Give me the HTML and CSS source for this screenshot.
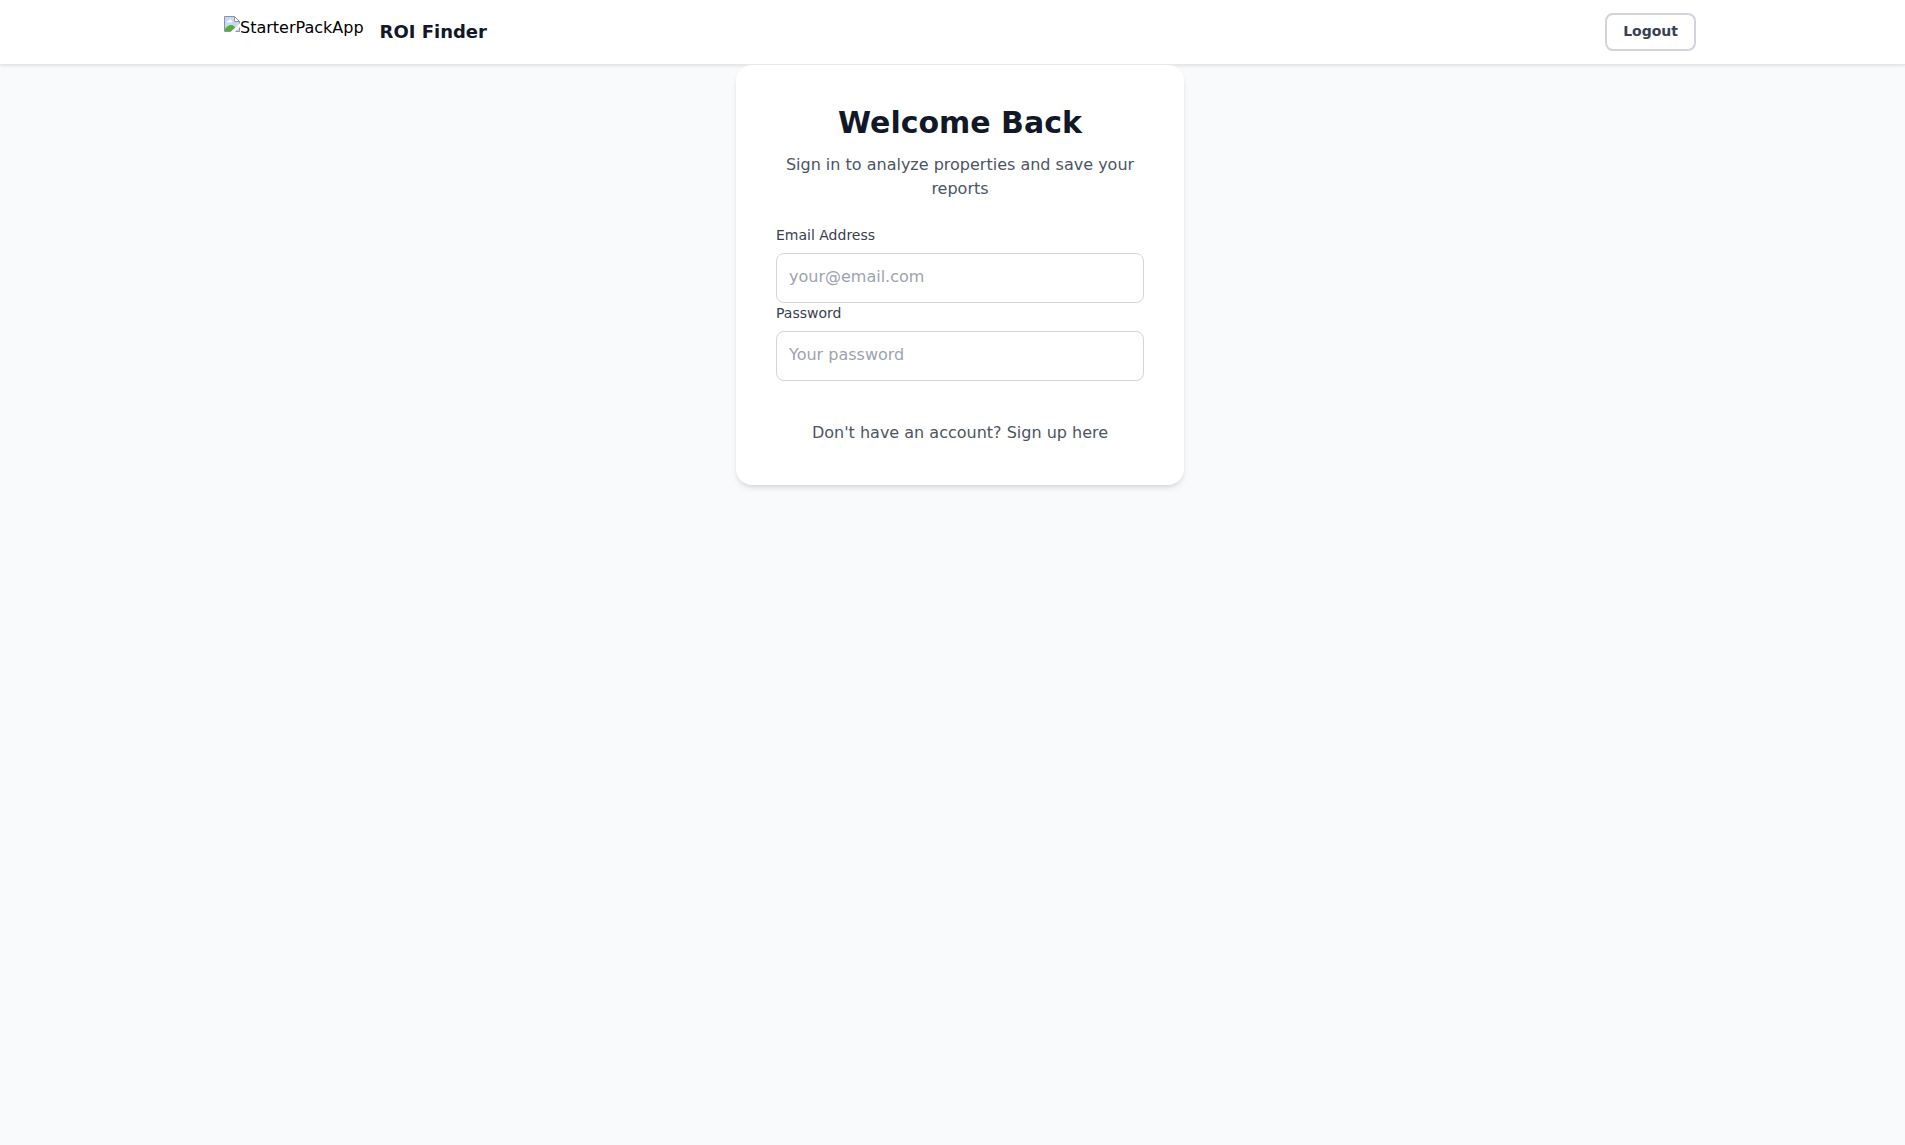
FILE: index.html
```html
<!DOCTYPE html>
<html lang="en">
<head>
<meta charset="utf-8">
<meta name="viewport" content="width=device-width, initial-scale=1">
<title>ROI Finder</title>
<link rel="stylesheet" href="styles.css">
</head>
<body>
<header class="site-header">
  <div class="header-inner">
    <div class="brand">
      <div class="brand-logo">
        <svg class="brand-icon" width="16" height="16" viewBox="0 0 16 16" aria-hidden="true">
          <path d="M0 0H11L16 5V16H0Z" fill="#fff"/>
          <path d="M1 1H10V6H15V15H1Z" fill="#c3d6fb"/>
          <path d="M3 6.500C3 5 4 4.800 4.500 4.500C5 3 7 3 7.500 4.500C8.500 4.800 8.500 6 8 6.500Z" fill="#fff"/>
          <path d="M1 15V13C3 10 6 8.500 8 9C10 9.500 12 11.500 13 15Z" fill="#56ad38"/>
          <path d="M.5 15.500V.5H10.500L15.500 5.500V15.500ZM10.500 .5V5.500H15.500" fill="none" stroke="#929292"/>
          <path d="M16 7L6.500 16H11L16 11Z" fill="#fff"/>
        </svg>
        <span>StarterPackApp</span>
      </div>
      <span class="brand-name">ROI Finder</span>
    </div>
    <button class="logout" type="button">Logout</button>
  </div>
</header>
<main class="page">
  <section class="card">
    <h1 class="card-title">Welcome Back</h1>
    <p class="card-lead">Sign in to analyze properties and save your reports</p>
    <form class="form">
      <label class="label" for="email">Email Address</label>
      <input class="input" id="email" type="email" placeholder="your@email.com">
      <label class="label" for="password">Password</label>
      <input class="input" id="password" type="password" placeholder="Your password">
    </form>
    <p class="card-footer">Don't have an account? <a class="link" href="#signup">Sign up here</a></p>
  </section>
</main>
</body>
</html>
```
FILE: styles.css
```css
:root {
  --scrollbar: 15px;
}

*, *::before, *::after {
  box-sizing: border-box;
}

body {
  margin: 0;
  min-height: 100vh;
  background: #f9fafb;
  color: #000;
  font: 16px/24px "DejaVu Sans", sans-serif;
}

.site-header {
  padding-left: var(--scrollbar);
  background: #fff;
  border-bottom: 1px solid #e5e7eb;
  box-shadow: 0 1px 3px rgba(0, 0, 0, 0.1);
}

.header-inner {
  display: flex;
  align-items: center;
  justify-content: space-between;
  max-width: 1536px;
  min-height: 64px;
  margin: 0 auto;
  padding: 0 32px;
}

.brand {
  display: flex;
  align-items: center;
  gap: 16px;
}

.brand-logo {
  display: flex;
  align-items: flex-start;
  height: 32px;
}

.brand-name {
  color: #111827;
  font-size: 18px;
  font-weight: 700;
  line-height: 28px;
}

.logout {
  padding: 6px 16px 8px;
  border: 2px solid #d1d5db;
  border-radius: 8px;
  background: #fff;
  color: #374151;
  font: 600 14px/20px "DejaVu Sans", sans-serif;
}

.page {
  padding-left: var(--scrollbar);
}

.card {
  max-width: 448px;
  margin: 0 auto;
  padding: 40px;
  border-radius: 16px;
  background: #fff;
  box-shadow: 0 4px 6px -1px rgba(0, 0, 0, 0.1), 0 2px 4px -2px rgba(0, 0, 0, 0.1);
}

.card-title {
  margin: 0 0 12px;
  color: #111827;
  font-size: 30px;
  font-weight: 700;
  line-height: 36px;
  text-align: center;
}

.card-lead {
  margin: 0 0 24px;
  color: #4b5563;
  text-align: center;
}

.label {
  display: block;
  margin-bottom: 8px;
  color: #374151;
  font-size: 14px;
  line-height: 20px;
}

.input {
  display: block;
  width: 100%;
  padding: 11px 12px 13px;
  border: 1px solid #d1d5db;
  border-radius: 8px;
  background: #fff;
  color: #111827;
  font: inherit;
}

.input::placeholder {
  color: #9ca3af;
}

.card-footer {
  margin: 40px 0 0;
  color: #4b5563;
  text-align: center;
}

.link {
  color: inherit;
  text-decoration: none;
}
```
